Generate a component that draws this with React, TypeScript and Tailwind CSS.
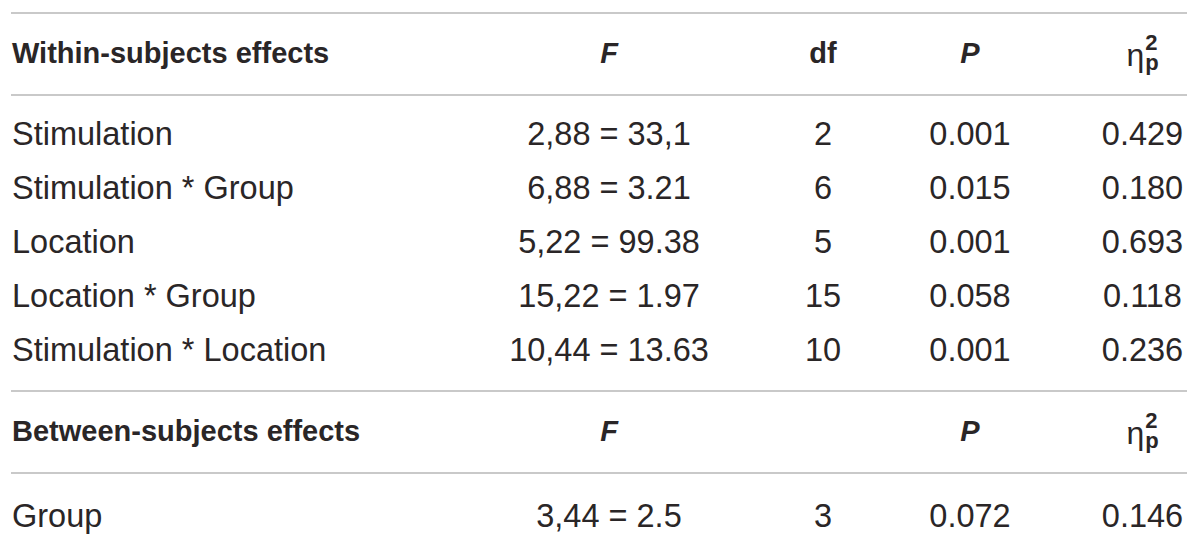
const within = [
  { label: "Stimulation", f: "2,88 = 33,1", df: "2", p: "0.001", eta: "0.429" },
  { label: "Stimulation * Group", f: "6,88 = 3.21", df: "6", p: "0.015", eta: "0.180" },
  { label: "Location", f: "5,22 = 99.38", df: "5", p: "0.001", eta: "0.693" },
  { label: "Location * Group", f: "15,22 = 1.97", df: "15", p: "0.058", eta: "0.118" },
  { label: "Stimulation * Location", f: "10,44 = 13.63", df: "10", p: "0.001", eta: "0.236" },
];

const cols = "grid grid-cols-[449px_298px_130px_164px_1fr] items-center";

function Eta() {
  return (
    <span className="inline-flex items-center pl-[46px]">
      <span className="font-normal text-[32px] leading-none mt-[2px]">η</span>
      <span className="flex flex-col items-start text-[22px] font-bold leading-[20px] -mt-[2px] ml-[1px]">
        <span>2</span>
        <span>p</span>
      </span>
    </span>
  );
}

function HeaderRow({ title, showDf }: { title: string; showDf: boolean }) {
  return (
    <div className={`${cols} h-[82px] font-bold text-[29px] border-b-2 border-[#c9c9c9]`}>
      <div className="pl-[1px]">{title}</div>
      <div className="text-center italic">F</div>
      <div className="text-center">{showDf ? "df" : ""}</div>
      <div className="text-center italic">P</div>
      <div className="flex justify-center"><Eta /></div>
    </div>
  );
}

export default function App() {
  return (
    <div
      className="w-[1200px] h-[544px] bg-white text-[#2a2627] pt-[12px] px-[11px] overflow-hidden"
      style={{ fontFamily: '"Liberation Sans", Arial, sans-serif' }}
    >
      <div className="w-[1176px] border-t-2 border-[#c9c9c9]">
        <HeaderRow title="Within-subjects effects" showDf />
        <div className="pt-[11px] pb-[13px] border-b-2 border-[#c9c9c9] text-[32.5px]">
          {within.map((r) => (
            <div key={r.label} className={`${cols} h-[54px]`}>
              <div className="pl-[1px]">{r.label}</div>
              <div className="text-center">{r.f}</div>
              <div className="text-center">{r.df}</div>
              <div className="text-center">{r.p}</div>
              <div className="text-center pl-[46px]">{r.eta}</div>
            </div>
          ))}
        </div>
        <HeaderRow title="Between-subjects effects" showDf={false} />
        <div className={`${cols} h-[84px] text-[32.5px]`}>
          <div className="pl-[1px]">Group</div>
          <div className="text-center">3,44 = 2.5</div>
          <div className="text-center">3</div>
          <div className="text-center">0.072</div>
          <div className="text-center pl-[46px]">0.146</div>
        </div>
      </div>
    </div>
  );
}
